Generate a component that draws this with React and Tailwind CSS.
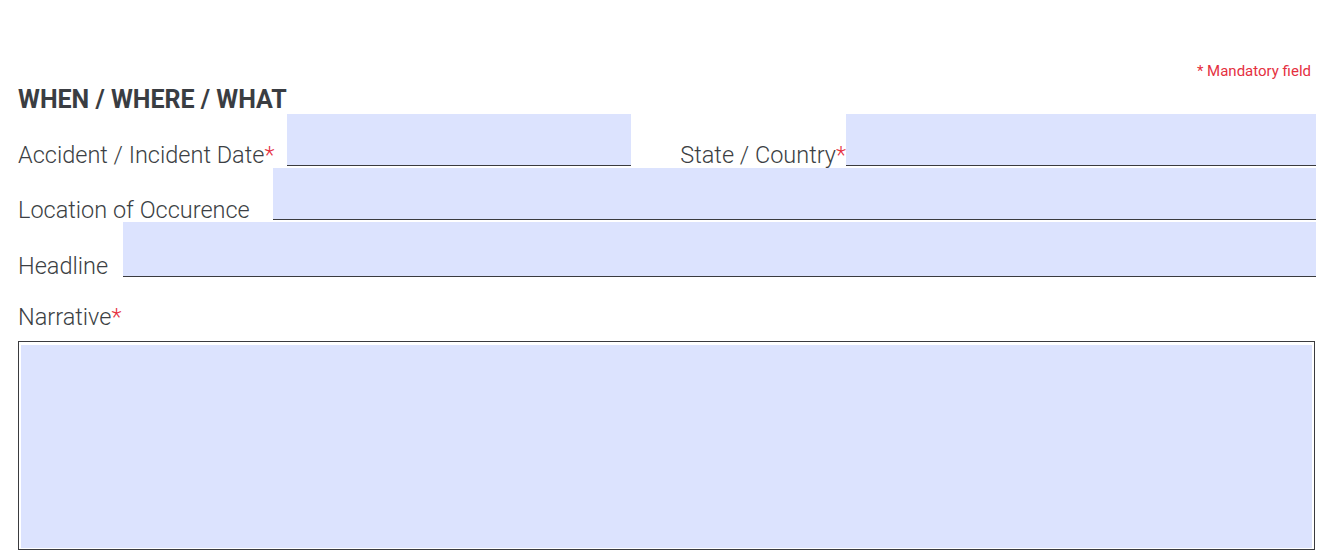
import React from 'react';

const Req = () => <span className="text-[#e5303f]">*</span>;

const Field = ({ className = '' }) => (
    <div className={`h-full bg-[#dce3fe] border-b border-[#3a3b3f] ${className}`} />
);

export default function App() {
    return (
        <div className="w-[1330px] h-[558px] bg-white pl-[18px] pr-[14px] font-['Roboto',sans-serif] text-[#3c3f44] overflow-hidden">
            <div className="flex justify-end pt-[63px] pr-[5px] text-[15px] leading-[17px] text-[#e5303f]">* Mandatory field</div>

            <h2 className="mt-[6px] text-[25px] leading-[28px] font-bold text-[#3a3d42]">WHEN / WHERE / WHAT</h2>

            <div className="flex h-[52px] items-end text-[23.5px] font-light leading-[22px]">
                <label className="w-[269px] shrink-0">Accident / Incident Date<Req /></label>
                <Field className="w-[344px] shrink-0" />
                <label className="w-[215px] shrink-0 text-right">State / Country<Req /></label>
                <Field className="flex-1" />
            </div>

            <div className="mt-[2px] flex h-[52px] items-end text-[23.5px] font-light leading-[22px]">
                <label className="w-[255px] shrink-0 mb-[-1px]">Location of Occurence</label>
                <Field className="flex-1" />
            </div>

            <div className="mt-[2px] flex h-[55px] items-end text-[23.5px] font-light leading-[22px]">
                <label className="w-[105px] shrink-0">Headline</label>
                <Field className="flex-1" />
            </div>

            <label className="mt-[28px] block text-[23.5px] font-light leading-[24px]">Narrative<Req /></label>

            <div className="mt-[12px] mr-[1px] h-[209px] border border-[#3a3b3f] px-[2px] pt-[3px] pb-[1px]">
                <div className="h-full bg-[#dce3fe]" />
            </div>
        </div>
    );
}
